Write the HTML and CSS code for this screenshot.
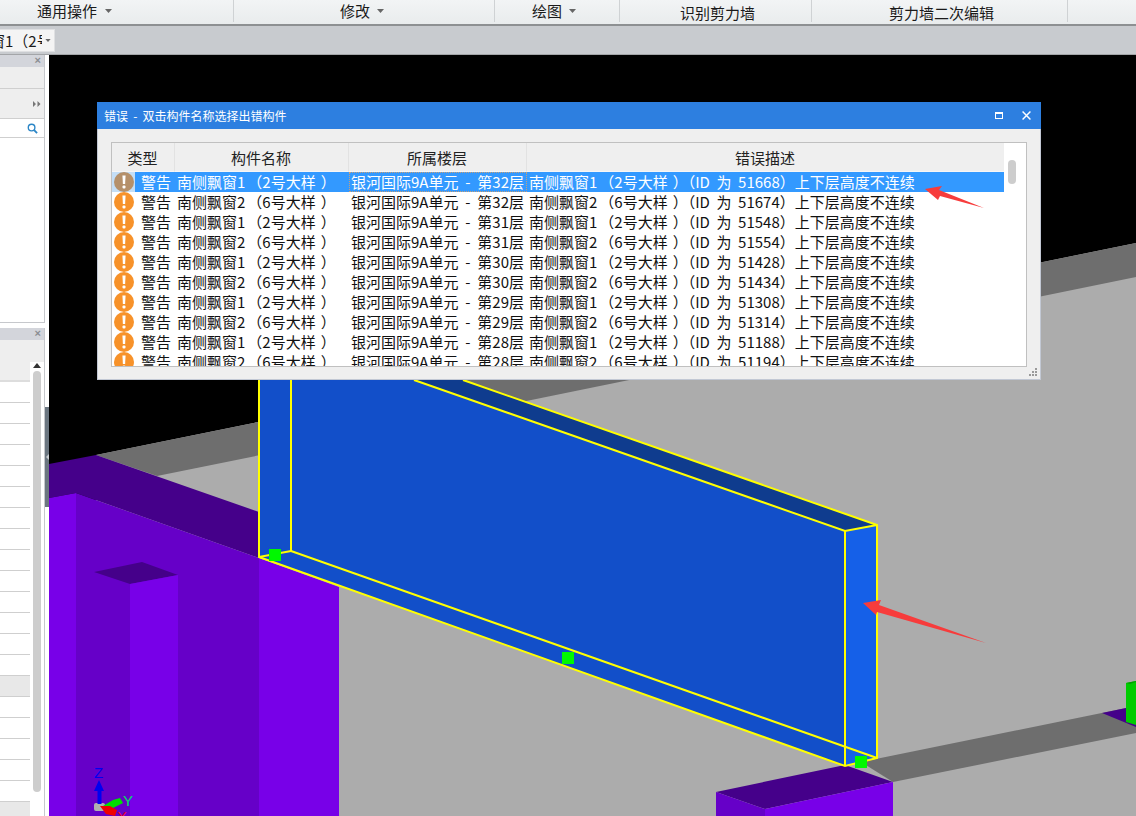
FILE: index.html
```html
<!DOCTYPE html>
<html lang="zh-CN">
<head>
<meta charset="utf-8">
<title>错误</title>
<link rel="stylesheet" href="styles.css">
</head>
<body>
<svg class="defs" width="0" height="0" aria-hidden="true">
  <symbol id="warn" viewBox="0 0 20 20">
    <circle cx="10" cy="10" r="10" fill="currentColor"/>
    <path d="M8.4 3.5h3.2l-.5 8.5H8.900z" fill="#fff"/>
    <rect x="8.500" y="13.500" width="3" height="3" rx="1" fill="#fff"/>
  </symbol>
  <symbol id="caret" viewBox="0 0 7 4"><path d="M0 0h7L3.500 4z" fill="#666"/></symbol>
</svg>

<header class="toolbar">
  <div class="tool t1"><span>通用操作</span><svg class="caret"><use href="#caret"/></svg></div>
  <div class="tool t2"><span>修改</span><svg class="caret"><use href="#caret"/></svg></div>
  <div class="tool t3"><span>绘图</span><svg class="caret"><use href="#caret"/></svg></div>
  <div class="tool t4 low"><span>识别剪力墙</span></div>
  <div class="tool t5 low"><span>剪力墙二次编辑</span></div>
</header>

<div class="subbar">
  <div class="combo"><span class="combo-text">窗1（2号大样）</span><svg class="caret small"><use href="#caret"/></svg></div>
</div>

<main class="main">
  <aside class="sidebar">
    <section class="panel top-panel">
      <div class="panel-head"><span class="x">×</span></div>
      <div class="panel-row r1"></div>
      <div class="panel-row r2"><svg class="more" viewBox="0 0 8 6"><path d="M0 0l3 3-3 3zM4.500 0l3 3-3 3z" fill="#777"/></svg></div>
      <div class="search">
        <svg class="mag" viewBox="0 0 12 12"><circle cx="5" cy="5" r="3.600" fill="none" stroke="#2c86c6" stroke-width="1.500"/><path d="M7.800 7.800l3.200 3.200" stroke="#2c86c6" stroke-width="2"/></svg>
      </div>
      <div class="panel-body"></div>
    </section>
    <section class="panel bottom-panel">
      <div class="panel-head"><span class="x">×</span></div>
      <div class="panel-row r3"></div>
      <div class="list-wrap">
        <div class="list">
          <div class="li head"></div>
          <div class="li"></div><div class="li"></div><div class="li"></div><div class="li"></div>
          <div class="li"></div><div class="li"></div><div class="li"></div><div class="li"></div>
          <div class="li"></div><div class="li"></div><div class="li"></div><div class="li"></div>
          <div class="li"></div><div class="li"></div><div class="li alt"></div><div class="li"></div>
          <div class="li"></div><div class="li"></div><div class="li"></div><div class="li"></div>
          <div class="li alt"></div>
        </div>
        <div class="vscroll"><span class="up"></span><span class="thumb"></span></div>
      </div>
    </section>
    <div class="splitter"><span class="grip"></span></div>
  </aside>

  <div class="viewport">
    <svg class="scene" viewBox="49 55 1087 761" width="1087" height="761">
      <rect x="49" y="55" width="1087" height="761" fill="#000"/>
      <polygon points="96,455 1136,243 1136,816 96,816" fill="#acacac"/>
      <polygon points="96,455 1136,243 1136,277 157,476" fill="#6e6e6e"/>
      <polygon points="861,762 1136,706 1136,733 893,782" fill="#6e6e6e"/>

      <polygon points="49,464 96,455 259,512 259,558 76,493 49,498" fill="#45008a"/>
      <polygon points="49,498 76,493 76,816 49,816" fill="#7800e8"/>
      <polygon points="76,493 259,558 259,816 76,816" fill="#6600c8"/>
      <polygon points="259,558 339,587 339,816 259,816" fill="#7800e8"/>
      <polygon points="94,572 142,562 178,575 130,584" fill="#45008a"/>
      <polygon points="130,584 178,575 178,816 130,816" fill="#7800e8"/>

      <polygon points="716,792 845,765 893,782 765,809" fill="#45008a"/>
      <polygon points="716,792 765,809 765,816 716,816" fill="#6600c8"/>
      <polygon points="765,809 893,782 893,816 765,816" fill="#7800e8"/>

      <polygon points="1102,713 1126,708 1136,714 1136,727" fill="#45008a"/>
      <polygon points="1126,683 1136,681 1136,725 1126,722" fill="#00cc00"/>
      <polygon points="1126,683 1136,681 1136,682 1130,684" fill="#00a000"/>

      <polygon points="259,340 400,340 414,380 845,531 845,766 259,557" fill="#124fc9"/>
      <polygon points="845,531 877,525 463,380 414,380" fill="#0f3c8e"/>
      <polygon points="845,531 877,525 877,758 845,766" fill="#1560e8"/>
      <g class="edges">
        <path d="M259 340V557L845 766L877 758V525L463 380"/>
        <path d="M291 340V551L877 758"/>
        <path d="M259 557L291 551"/>
        <path d="M414 380L845 531L877 525"/>
        <path d="M845 531V766"/>
      </g>
      <rect x="269" y="549" width="12" height="12" fill="#00f800"/>
      <rect x="562" y="652" width="12" height="12" fill="#00f800"/>
      <rect x="855" y="756" width="12" height="12" fill="#00f800"/>

      <polygon points="863,603 881,600 879,605 986,643 877,612 876,615" fill="#f73c3c"/>

      <g class="axis">
        <rect x="94" y="803" width="11" height="8" rx="2" fill="#b0b0b0"/>
        <rect x="97.500" y="787" width="4" height="17" fill="#0000f0"/>
        <polygon points="99,780 104,791 94,791" fill="#0000f0"/>
        <polygon points="103,806 113,800 120,798 123,803 113,808" fill="#00e000"/>
        <polygon points="100,806 110,806 117,810 115,816 106,814" fill="#f00000"/>
        <text x="94" y="778" class="ax z">Z</text>
        <text x="123" y="806" class="ax y">Y</text>
        <text x="117" y="822" class="ax v">X</text>
      </g>
    </svg>
  </div>
</main>

<section class="dialog">
  <div class="title">
    <span class="title-text">错误 - 双击构件名称选择出错构件</span>
    <span class="win-btn max"></span>
    <svg class="win-btn close" viewBox="0 0 8 8"><path d="M0.500 0.500l7 7M7.500 0.500l-7 7" stroke="#fff" stroke-width="1.300"/></svg>
  </div>
  <div class="dialog-body">
    <div class="table">
      <div class="table-main">
        <div class="thead">
          <div class="th c-type">类型</div>
          <div class="th c-name">构件名称</div>
          <div class="th c-floor">所属楼层</div>
          <div class="th c-desc">错误描述</div>
        </div>
        <div class="tr selected"><span class="ico"><svg class="warn"><use href="#warn"/></svg></span><span class="lvl">警告</span><span class="c-name td">南侧飘窗1<span class="pl">（</span>2号大样<span class="pr">）</span></span><span class="c-floor td focus">银河国际9A单元 - 第32层</span><span class="c-desc td">南侧飘窗1<span class="pl">（</span>2号大样<span class="pr">）</span>（ID 为 51668）上下层高度不连续</span></div>
        <div class="tr"><span class="ico"><svg class="warn"><use href="#warn"/></svg></span><span class="lvl">警告</span><span class="c-name td">南侧飘窗2<span class="pl">（</span>6号大样<span class="pr">）</span></span><span class="c-floor td">银河国际9A单元 - 第32层</span><span class="c-desc td">南侧飘窗2<span class="pl">（</span>6号大样<span class="pr">）</span>（ID 为 51674）上下层高度不连续</span></div>
        <div class="tr"><span class="ico"><svg class="warn"><use href="#warn"/></svg></span><span class="lvl">警告</span><span class="c-name td">南侧飘窗1<span class="pl">（</span>2号大样<span class="pr">）</span></span><span class="c-floor td">银河国际9A单元 - 第31层</span><span class="c-desc td">南侧飘窗1<span class="pl">（</span>2号大样<span class="pr">）</span>（ID 为 51548）上下层高度不连续</span></div>
        <div class="tr"><span class="ico"><svg class="warn"><use href="#warn"/></svg></span><span class="lvl">警告</span><span class="c-name td">南侧飘窗2<span class="pl">（</span>6号大样<span class="pr">）</span></span><span class="c-floor td">银河国际9A单元 - 第31层</span><span class="c-desc td">南侧飘窗2<span class="pl">（</span>6号大样<span class="pr">）</span>（ID 为 51554）上下层高度不连续</span></div>
        <div class="tr"><span class="ico"><svg class="warn"><use href="#warn"/></svg></span><span class="lvl">警告</span><span class="c-name td">南侧飘窗1<span class="pl">（</span>2号大样<span class="pr">）</span></span><span class="c-floor td">银河国际9A单元 - 第30层</span><span class="c-desc td">南侧飘窗1<span class="pl">（</span>2号大样<span class="pr">）</span>（ID 为 51428）上下层高度不连续</span></div>
        <div class="tr"><span class="ico"><svg class="warn"><use href="#warn"/></svg></span><span class="lvl">警告</span><span class="c-name td">南侧飘窗2<span class="pl">（</span>6号大样<span class="pr">）</span></span><span class="c-floor td">银河国际9A单元 - 第30层</span><span class="c-desc td">南侧飘窗2<span class="pl">（</span>6号大样<span class="pr">）</span>（ID 为 51434）上下层高度不连续</span></div>
        <div class="tr"><span class="ico"><svg class="warn"><use href="#warn"/></svg></span><span class="lvl">警告</span><span class="c-name td">南侧飘窗1<span class="pl">（</span>2号大样<span class="pr">）</span></span><span class="c-floor td">银河国际9A单元 - 第29层</span><span class="c-desc td">南侧飘窗1<span class="pl">（</span>2号大样<span class="pr">）</span>（ID 为 51308）上下层高度不连续</span></div>
        <div class="tr"><span class="ico"><svg class="warn"><use href="#warn"/></svg></span><span class="lvl">警告</span><span class="c-name td">南侧飘窗2<span class="pl">（</span>6号大样<span class="pr">）</span></span><span class="c-floor td">银河国际9A单元 - 第29层</span><span class="c-desc td">南侧飘窗2<span class="pl">（</span>6号大样<span class="pr">）</span>（ID 为 51314）上下层高度不连续</span></div>
        <div class="tr"><span class="ico"><svg class="warn"><use href="#warn"/></svg></span><span class="lvl">警告</span><span class="c-name td">南侧飘窗1<span class="pl">（</span>2号大样<span class="pr">）</span></span><span class="c-floor td">银河国际9A单元 - 第28层</span><span class="c-desc td">南侧飘窗1<span class="pl">（</span>2号大样<span class="pr">）</span>（ID 为 51188）上下层高度不连续</span></div>
        <div class="tr"><span class="ico"><svg class="warn"><use href="#warn"/></svg></span><span class="lvl">警告</span><span class="c-name td">南侧飘窗2<span class="pl">（</span>6号大样<span class="pr">）</span></span><span class="c-floor td">银河国际9A单元 - 第28层</span><span class="c-desc td">南侧飘窗2<span class="pl">（</span>6号大样<span class="pr">）</span>（ID 为 51194）上下层高度不连续</span></div>
      </div>
      <div class="table-scroll"><span class="table-thumb"></span></div>
    </div>
    <svg class="resize" viewBox="0 0 8 8"><path d="M6 0h2v2H6zM3 3h2v2H3zM6 3h2v2H6zM0 6h2v2H0zM3 6h2v2H3zM6 6h2v2H6z" fill="#9a9a9a"/></svg>
  </div>
</section>

<svg class="note-arrow" viewBox="0 0 62 26"><polygon points="1,6 18,3 15,7 60,25 16,13 14,17" fill="#f73c3c"/></svg>
</body>
</html>
```
FILE: styles.css
```css
* { box-sizing: border-box; }
html, body { margin: 0; padding: 0; }
body {
  position: relative;
  width: 1136px;
  height: 816px;
  overflow: hidden;
  background: #fff;
  color: #1a1a1a;
  font-family: "Noto Sans CJK SC", "Liberation Sans", sans-serif;
  font-size: 15px;
  text-spacing-trim: space-all;
}
.defs { position: absolute; }

/* top bars */
.toolbar {
  display: flex;
  height: 26px;
  background: linear-gradient(#f2f4f5, #e9eced);
  border-bottom: 2px solid #8d9092;
}
.tool {
  display: flex;
  align-items: center;
  gap: 8px;
  height: 22px;
  border-right: 1px solid #cfd2d4;
  line-height: 22px;
  white-space: nowrap;
}
.low { padding-top: 4px; }
.t1 { width: 234px; padding-left: 37px; }
.t2 { width: 261px; padding-left: 106px; gap: 7px; }
.t3 { width: 125px; padding-left: 37px; gap: 7px; }
.t4 { width: 192px; padding-left: 60px; }
.t5 { width: 256px; padding-left: 77px; }
.caret { width: 7px; height: 4px; flex: none; }

.subbar {
  height: 29px;
  padding-top: 3px;
  background: #c8cbcf;
  border-bottom: 1px solid #a3a5a8;
}
.combo {
  display: flex;
  align-items: center;
  width: 55px;
  height: 23px;
  overflow: hidden;
  background: #f4f4f4;
  border: 1px solid #dfe0e2;
  border-left: 0;
}
.combo-text {
  flex: none;
  width: 52px;
  margin-left: -10px;
  margin-right: 3px;
  overflow: hidden;
  white-space: nowrap;
}
.caret.small { width: 6px; height: 3px; flex: none; }

/* main */
.main { display: flex; height: 761px; }
.sidebar {
  position: relative;
  display: flex;
  flex-direction: column;
  flex: none;
  gap: 5px;
  width: 49px;
  padding-right: 4px;
  background: #fff;
}
.panel { border-right: 1px solid #c6c8cc; }
.top-panel { height: 268px; display: flex; flex-direction: column; border-bottom: 1px solid #c6c8cc; }
.bottom-panel { flex: 1; display: flex; flex-direction: column; min-height: 0; }
.panel-head {
  position: relative;
  flex: none;
  height: 12px;
  background: #d3d5db;
}
.x {
  position: absolute;
  right: 3px;
  top: 0;
  font: bold 11px/11px "Liberation Sans", sans-serif;
  color: #8b8d92;
}
.panel-row { flex: none; background: #eeeeee; border-bottom: 1px solid #cfcfcf; position: relative; }
.r1 { height: 22px; }
.r2 { height: 30px; }
.r3 { height: 22px; border-bottom: 0; }
.more {
  position: absolute;
  right: 3px;
  top: 12px;
  width: 8px;
  height: 6px;
}
.search {
  flex: none;
  display: flex;
  justify-content: flex-end;
  align-items: center;
  height: 19px;
  padding-right: 6px;
  background: #fff;
  border-bottom: 1px solid #cfcfcf;
}
.mag { width: 11px; height: 11px; }
.panel-body { flex: 1; background: #fff; }
.list-wrap { flex: 1; display: flex; min-height: 0; overflow: hidden; }
.list { flex: none; width: 30px; }
.li { height: 21px; border-bottom: 1px solid #cfcfcf; background: #fff; }
.li.head { height: 20px; background: #eeeeee; border-bottom: 2px solid #dddddd; }
.li.alt { background: #e8e8e8; }
.vscroll {
  flex: none;
  display: flex;
  flex-direction: column;
  align-items: center;
  width: 14px;
  padding-top: 1px;
}
.up {
  flex: none;
  width: 0;
  height: 0;
  border-left: 4px solid transparent;
  border-right: 4px solid transparent;
  border-bottom: 5px solid #333;
}
.thumb {
  flex: none;
  width: 8px;
  height: 421px;
  margin-top: 3px;
  background: #cdcdcd;
  border-radius: 4px;
}
.splitter {
  position: absolute;
  left: 45px;
  top: 352px;
  width: 4px;
  height: 100px;
  background: #6b7680;
}
.grip {
  position: absolute;
  left: 1px;
  top: 47px;
  width: 0;
  height: 0;
  border-top: 3px solid transparent;
  border-bottom: 3px solid transparent;
  border-right: 3px solid #c8ccd0;
}

.viewport { flex: 1; min-width: 0; overflow: hidden; background: #000; }
.scene { display: block; }
.edges path { fill: none; stroke: #ffff00; stroke-width: 2; }
.ax { font: 15px "Liberation Sans", sans-serif; }
.ax.z { fill: #0000f0; }
.ax.y { fill: #00e060; }
.ax.v { fill: #f00030; }

/* dialog */
.dialog {
  position: absolute;
  left: 97px;
  top: 102px;
  width: 944px;
  height: 278px;
  display: flex;
  flex-direction: column;
  background: #efefef;
  border: 1px solid #c2c8d4;
  border-top: 0;
}
.title {
  display: flex;
  align-items: center;
  flex: none;
  height: 27px;
  margin: 0 -1px;
  padding: 0 10px 0 7px;
  background: #2d7fe0;
  color: #fff;
}
.title-text { flex: 1; font-size: 12px; word-spacing: 2.500px; }
.win-btn { flex: none; }
.win-btn.max {
  width: 8px;
  height: 7px;
  margin-right: 19px;
  border: 1px solid #fff;
  border-top-width: 2px;
}
.win-btn.close { width: 9px; height: 9px; }
.dialog-body { position: relative; flex: 1; padding: 13px 13px 0 13px; }
.table {
  display: flex;
  height: 225px;
  background: #fff;
  border: 1px solid #c0c0c0;
  overflow: hidden;
}
.table-main { flex: 1; min-width: 0; }
.thead { display: flex; height: 29px; background: #efefef; }
.th {
  flex: none;
  padding-right: 1px;
  line-height: 30px;
  text-align: center;
  color: #222;
  border-right: 1px solid #e2e2e2;
  border-bottom: 1px solid #f6f6f6;
}
.c-type { width: 63px; }
.c-name { width: 174px; }
.c-floor { width: 178px; }
.c-desc { flex: none; width: 478px; }
.tr { display: flex; height: 20px; line-height: 20px; white-space: nowrap; color: #111; }
.ico { flex: none; display: flex; align-items: center; justify-content: center; width: 23px; padding-left: 1px; color: #f7922a; }
.warn { width: 20px; height: 20px; display: block; }
.lvl { flex: none; width: 40px; padding-left: 6px; }
.td { flex: none; padding-left: 2px; overflow: hidden; word-spacing: 3.250px; text-spacing-trim: normal; }
.td.c-floor { word-spacing: 3.500px; }
.pl { margin-left: 2px; }
.pr { margin-left: 5px; }
.tr.selected { background: #3399ff; color: #fff; }
.tr.selected .ico { background: #c4def6; color: #b5906a; }
.tr.selected .focus { outline: 1px dotted #c8a078; outline-offset: -1px; }
.table-scroll { position: relative; flex: none; width: 22px; background: #fff; }
.table-thumb {
  position: absolute;
  left: 4px;
  top: 17px;
  width: 8px;
  height: 24px;
  background: #cdcdcd;
  border-radius: 4px;
}
.resize { position: absolute; right: 3px; bottom: 3px; width: 8px; height: 8px; }
.note-arrow {
  position: absolute;
  left: 924px;
  top: 183px;
  width: 62px;
  height: 26px;
}
```
